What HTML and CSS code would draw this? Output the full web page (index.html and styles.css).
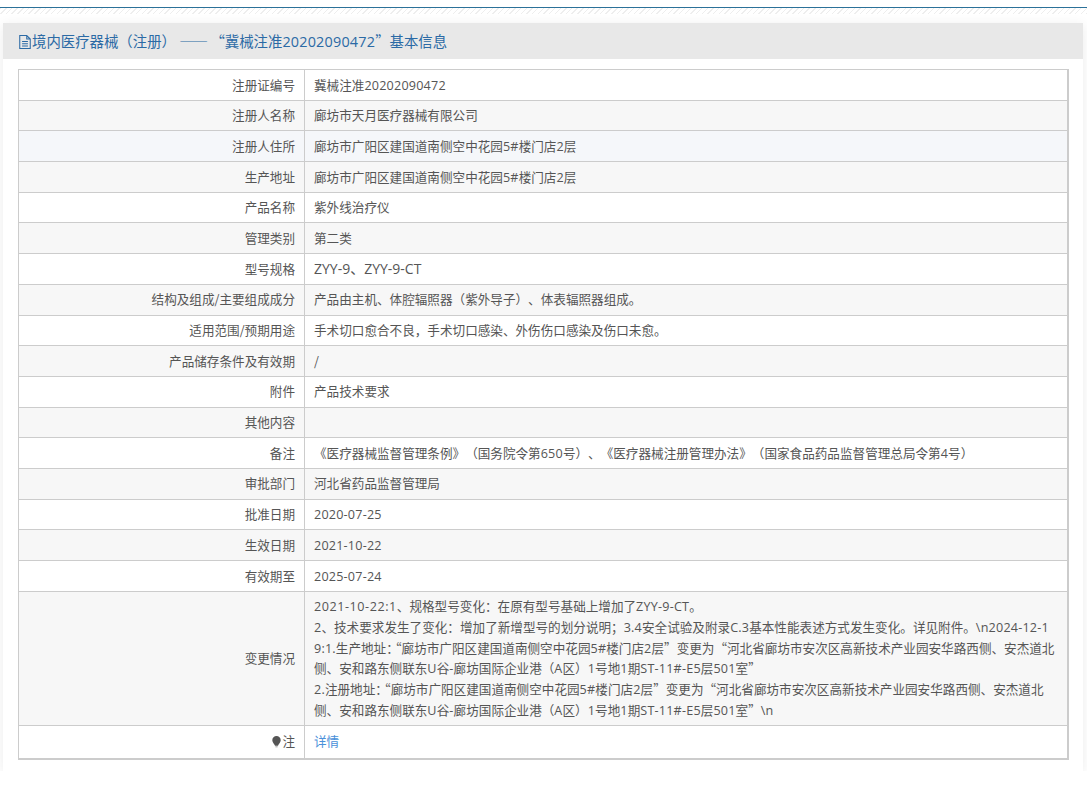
FILE: index.html
```html
<!DOCTYPE html>
<html lang="zh-CN">
<head>
<meta charset="UTF-8">
<title>境内医疗器械（注册）基本信息</title>
<link rel="stylesheet" href="styles.css">
</head>
<body>
<div class="top-line"></div>
<div class="panel">
    <div class="panel-heading">
        <svg class="doc-icon" viewBox="2 1 10 12" width="12" height="14"><path d="M2.500 1.500h6l3 3v8h-9z M8.500 1.500v3h3 M4.500 6.500h5 M4.500 8.500h5 M4.500 10.500h5" fill="none" stroke="#2b6aa5" stroke-width="0.9"/></svg>境内医疗器械（注册） <span class="dash">——</span>“冀械注准<span class="en">20202090472</span>”基本信息
    </div>
    <div class="panel-body">
        <table class="info-table">
            <tr><th>注册证编号</th><td>冀械注准<span class="en">20202090472</span></td></tr>
            <tr><th>注册人名称</th><td>廊坊市天月医疗器械有限公司</td></tr>
            <tr class="hover"><th>注册人住所</th><td>廊坊市广阳区建国道南侧空中花园<span class="en">5#</span>楼门店<span class="en">2</span>层</td></tr>
            <tr><th>生产地址</th><td>廊坊市广阳区建国道南侧空中花园<span class="en">5#</span>楼门店<span class="en">2</span>层</td></tr>
            <tr><th>产品名称</th><td>紫外线治疗仪</td></tr>
            <tr><th>管理类别</th><td>第二类</td></tr>
            <tr><th>型号规格</th><td><span class="model">ZYY-9、ZYY-9-CT</span></td></tr>
            <tr><th>结构及组成/主要组成成分</th><td>产品由主机、体腔辐照器（紫外导子）、体表辐照器组成。</td></tr>
            <tr><th>适用范围/预期用途</th><td>手术切口愈合不良，手术切口感染、外伤伤口感染及伤口未愈。</td></tr>
            <tr><th>产品储存条件及有效期</th><td>/</td></tr>
            <tr><th>附件</th><td>产品技术要求</td></tr>
            <tr><th>其他内容</th><td></td></tr>
            <tr><th>备注</th><td>《医疗器械监督管理条例》（国务院令第<span class="en">650</span>号）、《医疗器械注册管理办法》（国家食品药品监督管理总局令第<span class="en">4</span>号）</td></tr>
            <tr><th>审批部门</th><td>河北省药品监督管理局</td></tr>
            <tr><th>批准日期</th><td><span class="en">2020-07-25</span></td></tr>
            <tr><th>生效日期</th><td><span class="en">2021-10-22</span></td></tr>
            <tr><th>有效期至</th><td><span class="en">2025-07-24</span></td></tr>
            <tr><th>变更情况</th><td class="change"><span class="en wide">2021-10-22:1</span>、规格型号变化：在原有型号基础上增加了<span class="en">ZYY-9-CT</span>。<br>
<span class="en">2</span>、技术要求发生了变化：增加了新增型号的划分说明；<span class="en">3.4</span>安全试验及附录<span class="en">C.3</span>基本性能表述方式发生变化。详见附件。<span class="en">\n2024-12-19:1.</span>生产地址<span class="colon">：</span>“廊坊市广阳区建国道南侧空中花园<span class="en">5#</span>楼门店<span class="en">2</span>层”变更为“河北省廊坊市安次区高新技术产业园安华路西侧、安杰道北侧、安和路东侧联东<span class="en">U</span>谷<span class="en">-</span>廊坊国际企业港（<span class="en">A</span>区）<span class="en">1</span>号地<span class="en">1</span>期<span class="en">ST-11#-E5</span>层<span class="en">501</span>室”<br>
<span class="en">2.</span>注册地址<span class="colon">：</span>“廊坊市广阳区建国道南侧空中花园<span class="en">5#</span>楼门店<span class="en">2</span>层”变更为“河北省廊坊市安次区高新技术产业园安华路西侧、安杰道北侧、安和路东侧联东<span class="en">U</span>谷<span class="en">-</span>廊坊国际企业港（<span class="en">A</span>区）<span class="en">1</span>号地<span class="en">1</span>期<span class="en">ST-11#-E5</span>层<span class="en">501</span>室”<span class="en">\n</span></td></tr>
            <tr class="last-row"><th><svg class="bulb-icon" viewBox="0 0 12 14" width="11" height="13"><path d="M6 1a4.600 4.600 0 0 1 4.600 4.600c0 2.400-2.400 4-3 5.900h-3.200c-.6-1.900-3-3.500-3-5.900A4.600 4.600 0 0 1 6 1z" fill="#555"/><path d="M4.800 12.300h2.400v1h-2.400z" fill="#999"/></svg>注</th><td><a class="link" href="#">详情</a></td></tr>
        </table>
    </div>
</div>
</body>
</html>
```
FILE: styles.css
```css
body {
    margin: 0;
    background-color: #fff;
    color: #555;
    font-family: "Noto Sans CJK SC", sans-serif;
    font-size: 12.6px;
    text-spacing-trim: space-all;
}
.en {
    font-family: "Open Sans", "Noto Sans CJK SC", sans-serif;
    letter-spacing: 0.2px;
    line-height: 1;
}
.en.wide {
    letter-spacing: 0.55px;
}
.model {
    font-family: "Open Sans", "Noto Sans CJK SC", sans-serif;
    font-size: 14px;
    line-height: 1;
}
.dash {
    letter-spacing: 2.500px;
}
.colon {
    margin-right: -3.500px;
}
.top-line {
    height: 6px;
    margin-top: 7px;
    border-top: 1px solid #2b7199;
    background: repeating-linear-gradient(135deg, #eee 0, #eee 1px, #fff 1px, #fff 4px);
}
.panel {
    margin: 9px 4px 0 3px;
    background-color: #fff;
    box-shadow: 0 2px 12px rgba(0, 0, 0, 0.08);
}
.panel-heading {
    height: 36px;
    line-height: 35px;
    padding-left: 15px;
    background-color: #e8e8e8;
    color: #2b6aa5;
    font-size: 14.4px;
}
.doc-icon {
    margin: 0 1px;
    vertical-align: -2px;
}
.panel-body {
    padding: 10px 14px 11px 15px;
}
.info-table {
    width: 100%;
    border-collapse: collapse;
    border-right: 2px solid #ccc;
    border-bottom: 2px solid #ccc;
}
.info-table th,
.info-table td {
    border: 1px solid #ccc;
    padding: 4.500px 9px;
    line-height: 20.69px;
    font-weight: normal;
    word-break: break-all;
}
.info-table th {
    width: 267px;
    text-align: right;
}
.info-table td.change {
    padding-right: 11px;
    text-spacing-trim: normal;
}
.info-table tr:nth-child(even) {
    background-color: #f7f7f7;
}
.info-table tr.hover {
    background-color: #f5f7fa;
}
.info-table tr.last-row th,
.info-table tr.last-row td {
    padding-top: 5.500px;
    padding-bottom: 5.500px;
}
.bulb-icon {
    vertical-align: -2px;
}
.link {
    color: #4a90d9;
    text-decoration: none;
}
```
